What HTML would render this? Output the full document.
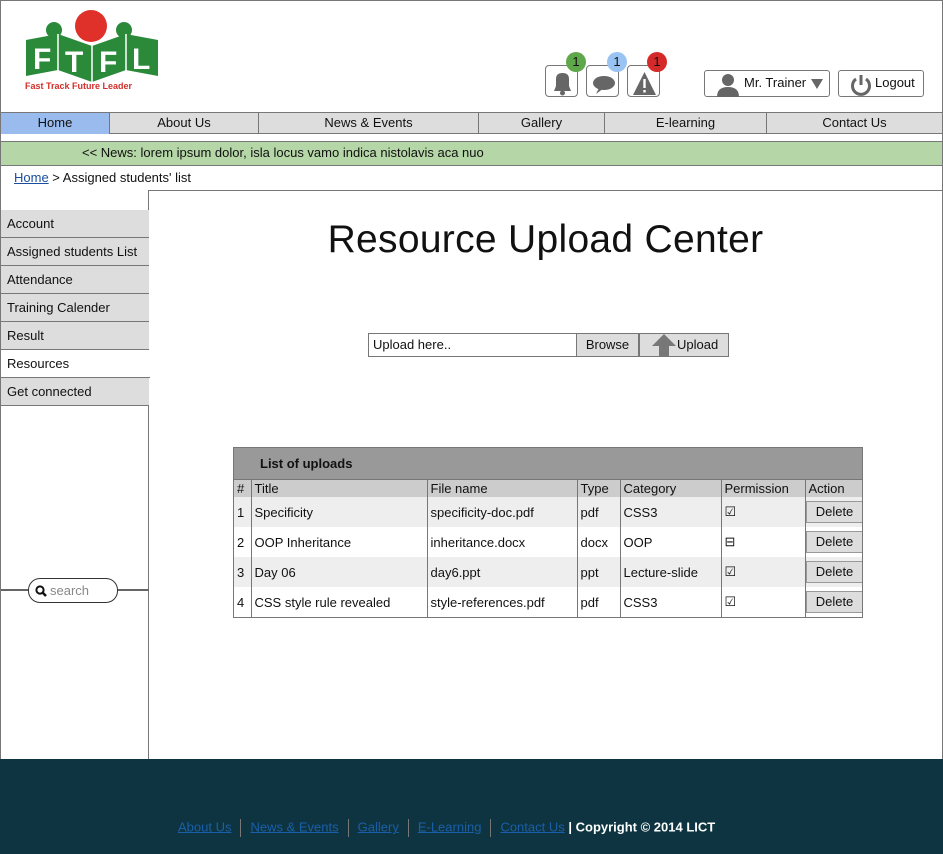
<!DOCTYPE html>
<html><head><meta charset="utf-8"><style>
*{margin:0;padding:0;box-sizing:border-box}
body{width:943px;height:854px;position:relative;font-family:"Liberation Sans",sans-serif;font-size:13px;color:#111;background:#fff;overflow:hidden}
.a{position:absolute}
.nav div{position:absolute;top:0;height:21px;line-height:20px;text-align:center;font-size:13px;border-right:1px solid #777}
.side div{position:absolute;left:0;width:148px;height:28px;line-height:27px;padding-left:6px;background:#ddd;border-bottom:1px solid #777;font-size:13px}
table{border-collapse:collapse;font-size:13px;table-layout:fixed}
td{border-left:1px solid #777;padding:0 0 0 3px;height:30px;white-space:nowrap;overflow:hidden}
tr.h td{height:17px;line-height:16px}
.btn{border:1px solid #777;border-radius:3px;background:#fff}
.ib{position:absolute;top:65px;width:33px;height:32px;border:1px solid #777;border-radius:4px;background:#fff}
.bd{position:absolute;width:20px;height:20px;border-radius:50%;text-align:center;line-height:20px;font-size:13px}
.del{display:block;width:58px;height:22px;background:#ddd;border:1px solid #999;line-height:20px;text-align:center;margin-left:-3px}
.ft a{color:#1a5fa8;text-decoration:underline;font-size:13px}
.ft span.s{display:inline-block;width:1px;height:18px;background:#777;margin:0 9px;vertical-align:middle}
</style></head><body>
<div class="a" style="left:0;top:0;width:943px;height:854px;border:1px solid #777"></div>
<svg class="a" style="left:22px;top:10px" width="140" height="82">
<circle cx="69" cy="16" r="16" fill="#e0302a"/>
<circle cx="32" cy="20" r="8" fill="#2a8a3a"/><circle cx="102" cy="20" r="8" fill="#2a8a3a"/>
<polygon points="4,30 36,24 70,36 104,24 136,30 136,66 104,60 70,72 36,60 4,66" fill="#2a8a3a"/>
<line x1="36" y1="24" x2="36" y2="62" stroke="#fff" stroke-width="1.5"/><line x1="70" y1="34" x2="70" y2="72" stroke="#fff" stroke-width="1.5"/><line x1="104" y1="24" x2="104" y2="62" stroke="#fff" stroke-width="1.5"/>
<text x="11" y="59" font-family="Liberation Sans" font-weight="bold" font-size="30" fill="#fff">F</text>
<text x="43" y="62" font-family="Liberation Sans" font-weight="bold" font-size="30" fill="#fff">T</text>
<text x="77" y="62" font-family="Liberation Sans" font-weight="bold" font-size="30" fill="#fff">F</text>
<text x="110" y="59" font-family="Liberation Sans" font-weight="bold" font-size="30" fill="#fff">L</text>
<text x="3" y="79" font-family="Liberation Sans" font-weight="bold" font-size="9" fill="#d0302a">Fast Track Future Leader</text>
</svg>
<div class="ib" style="left:545px"><svg width="33" height="32"><path d="M8 25 L25 25 L23 20 L23 13 Q23 7 16.5 7 Q10 7 10 13 L10 20 Z" fill="#666"/><circle cx="16.5" cy="27" r="2.5" fill="#666"/></svg></div>
<div class="ib" style="left:586px"><svg width="33" height="32"><ellipse cx="17" cy="17" rx="11" ry="7" fill="#666"/><path d="M12 22 L9 28 L17 22 Z" fill="#666"/></svg></div>
<div class="ib" style="left:627px"><svg width="33" height="32"><path d="M16.5 6 L28 29 L5 29 Z" fill="#666"/><rect x="15.3" y="13" width="2.4" height="9" fill="#fff"/><rect x="15.3" y="24" width="2.4" height="2.5" fill="#fff"/></svg></div>
<div class="bd" style="left:566px;top:52px;background:#5fa84a">1</div>
<div class="bd" style="left:607px;top:52px;background:#99c3f2">1</div>
<div class="bd" style="left:647px;top:52px;background:#d52a2a">1</div>
<div class="a btn" style="left:704px;top:70px;width:126px;height:27px"><svg class="a" style="left:10px;top:1px" width="26" height="25"><circle cx="13" cy="8" r="6" fill="#666"/><path d="M2 25 Q2 15 13 15 Q24 15 24 25 Z" fill="#666"/></svg><span class="a" style="left:39px;top:4px">Mr. Trainer</span><svg class="a" style="left:106px;top:8px" width="12" height="10"><path d="M0 0 L12 0 L6 10 Z" fill="#666"/></svg></div>
<div class="a btn" style="left:838px;top:70px;width:86px;height:27px"><svg class="a" style="left:10px;top:2px" width="24" height="24"><path d="M7 6 A8.5 8.5 0 1 0 17 6" fill="none" stroke="#666" stroke-width="3"/><line x1="12" y1="2" x2="12" y2="12" stroke="#666" stroke-width="3"/></svg><span class="a" style="left:36px;top:4px">Logout</span></div>
<div class="a nav" style="left:1px;top:112px;width:941px;height:22px;background:#ddd;border-top:1px solid #777;border-bottom:1px solid #777">
<div style="left:0;width:109px;background:#99bbee">Home</div>
<div style="left:109px;width:149px">About Us</div>
<div style="left:258px;width:220px">News &amp; Events</div>
<div style="left:478px;width:126px">Gallery</div>
<div style="left:604px;width:162px">E-learning</div>
<div style="left:766px;width:175px;border-right:none">Contact Us</div>
</div>
<div class="a" style="left:1px;top:141px;width:941px;height:25px;background:#b5d6a7;border-top:1px solid #777;border-bottom:1px solid #777;line-height:22px;padding-left:81px">&lt;&lt; News: lorem ipsum dolor, isla locus vamo indica nistolavis aca nuo</div>
<div class="a" style="left:14px;top:170px"><a style="color:#1a4fa0;text-decoration:underline">Home</a> &gt; Assigned students' list</div>
<div class="a" style="left:148px;top:190px;width:794px;height:569px;border-top:1px solid #777;border-left:1px solid #777"></div>
<div class="a" style="left:1px;top:210px;width:148px;height:549px;border-right:1px solid #777;border-top:1px solid #777"></div>
<div class="a side" style="left:1px;top:210px">
<div style="top:0">Account</div>
<div style="top:28px">Assigned students List</div>
<div style="top:56px">Attendance</div>
<div style="top:84px">Training Calender</div>
<div style="top:112px">Result</div>
<div style="top:140px;background:#fff;width:149px">Resources</div>
<div style="top:168px">Get connected</div>
</div>
<div class="a" style="left:1px;top:589px;width:148px;height:2px;background:#666"></div>
<div class="a" style="left:28px;top:578px;width:90px;height:25px;border:1px solid #333;border-radius:12px;background:#fff"><svg class="a" style="left:6px;top:6px" width="12" height="12"><circle cx="5" cy="5" r="3.6" fill="none" stroke="#111" stroke-width="2"/><line x1="7.5" y1="7.5" x2="11" y2="11" stroke="#111" stroke-width="2.5"/></svg><span class="a" style="left:21px;top:4px;color:#888">search</span></div>
<div class="a" style="left:149px;top:218px;width:793px;text-align:center;font-size:39px;letter-spacing:0.3px">Resource Upload Center</div>
<div class="a" style="left:368px;top:333px;width:209px;height:24px;border:1px solid #777;padding-left:4px;line-height:22px">Upload here..</div>
<div class="a" style="left:576px;top:333px;width:63px;height:24px;border:1px solid #777;background:#ddd;text-align:center;line-height:22px">Browse</div>
<div class="a" style="left:639px;top:333px;width:90px;height:24px;border:1px solid #777;background:#ddd;line-height:22px"><svg class="a" style="left:11px;top:0" width="26" height="23"><path d="M13 0 L25 12 L18 12 L18 23 L8 23 L8 12 L1 12 Z" fill="#777"/></svg><span class="a" style="left:37px;top:0">Upload</span></div>
<div class="a" style="left:233px;top:447px;width:630px;height:171px;border:1px solid #777;overflow:hidden">
<div style="height:32px;background:#999;border-bottom:1px solid #777;font-weight:bold;padding-left:26px;line-height:31px">List of uploads</div>
<table style="width:629px">
<colgroup><col style="width:17px"><col style="width:176px"><col style="width:150px"><col style="width:43px"><col style="width:101px"><col style="width:84px"><col style="width:58px"></colgroup>
<tr class="h" style="background:#ccc"><td style="border-left:none">#</td><td>Title</td><td>File name</td><td>Type</td><td>Category</td><td>Permission</td><td>Action</td></tr>
<tr style="background:#eee"><td style="border-left:none">1</td><td>Specificity</td><td>specificity-doc.pdf</td><td>pdf</td><td>CSS3</td><td>☑</td><td><span class="del">Delete</span></td></tr>
<tr><td style="border-left:none">2</td><td>OOP Inheritance</td><td>inheritance.docx</td><td>docx</td><td>OOP</td><td>⊟</td><td><span class="del">Delete</span></td></tr>
<tr style="background:#eee"><td style="border-left:none">3</td><td>Day 06</td><td>day6.ppt</td><td>ppt</td><td>Lecture-slide</td><td>☑</td><td><span class="del">Delete</span></td></tr>
<tr><td style="border-left:none">4</td><td>CSS style rule revealed</td><td>style-references.pdf</td><td>pdf</td><td>CSS3</td><td>☑</td><td><span class="del">Delete</span></td></tr>
</table></div>
<div class="a ft" style="left:0;top:759px;width:943px;height:95px;background:#0d3440">
<div class="a" style="left:178px;top:60px;color:#fff;white-space:nowrap"><a>About Us</a><span class="s"></span><a>News &amp; Events</a><span class="s"></span><a>Gallery</a><span class="s"></span><a>E-Learning</a><span class="s"></span><a>Contact Us</a> <b style="font-size:13px">| Copyright © 2014 LICT</b></div>
</div>
</body></html>
